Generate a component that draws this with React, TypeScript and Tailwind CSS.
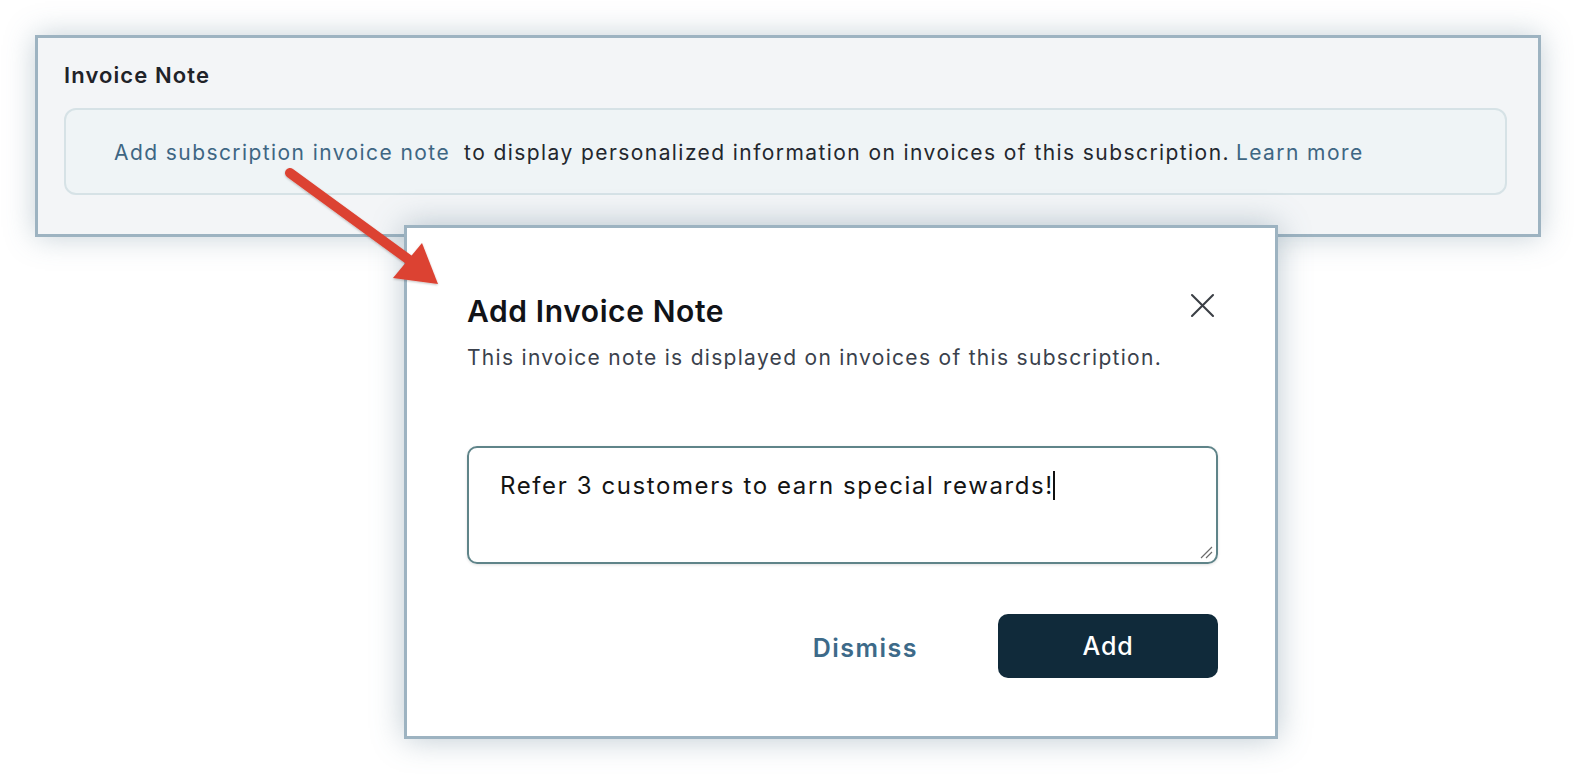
import React from "react";

export default function App() {
  return (
    <div
      className="relative w-[1574px] h-[774px] bg-white overflow-hidden"
      style={{ fontFamily: "Inter, 'Noto Sans', sans-serif" }}
    >
      {/* Background card */}
      <div className="pt-[35px] pl-[35px]">
        <div className="w-[1506px] h-[202px] border-[3px] border-[#9db3c1] bg-[#f3f5f7] shadow-[0_0_28px_rgba(90,120,140,0.35)] pl-[26px] pr-[31px] pt-[22px]">
          <div className="text-[22px] leading-[30px] font-semibold tracking-[1.1px] text-[#1f2329]">Invoice Note</div>
          <div className="mt-[18px] h-[87px] rounded-[12px] border-2 border-[#d6e2e6] bg-[#eff4f6] flex items-center pl-[48px] pt-[2px] text-[21px] tracking-[1.42px] text-[#23272e]">
            <span className="text-[#3e6683]">Add subscription invoice note</span>
            <span className="ml-[14px]">to display personalized information on invoices of this subscription.</span>
            <span className="ml-[6px] text-[#3e6683]">Learn more</span>
          </div>
        </div>
      </div>

      {/* Modal */}
      <div className="relative ml-[404px] -mt-[12px] w-[874px] h-[514px] border-[3px] border-[#9db3c1] bg-white shadow-[0_0_30px_rgba(90,120,140,0.4)] pl-[60px] pr-[57px] pt-[64px]">
        <div className="text-[30px] leading-[38px] font-semibold tracking-[0.6px] text-[#111318]">Add Invoice Note</div>
        <button className="absolute right-[58px] top-[62px] w-[30px] h-[30px] flex items-center justify-center text-[#3b3f45]">
          <svg width="25" height="25" viewBox="0 0 25 25" fill="none" stroke="currentColor" strokeWidth="2.1" strokeLinecap="round">
            <path d="M2 2 L23 23 M23 2 L2 23" />
          </svg>
        </button>
        <div className="mt-[14px] text-[21px] leading-[28px] tracking-[1.3px] text-[#3a414c]">
          This invoice note is displayed on invoices of this subscription.
        </div>
        <div className="relative mt-[74px] h-[118px] rounded-[10px] border-2 border-[#5f8489] shadow-[0_1px_3px_rgba(0,0,0,0.12)] pl-[31px] pt-[22px] text-[24px] leading-[32px] tracking-[1.6px] text-[#141414]">
          <span>Refer 3 customers to earn special rewards!</span>
          <span className="inline-block align-middle w-[2px] h-[29px] bg-[#111] -mt-[4px] -ml-[1px]"></span>
          <svg className="absolute right-[3px] bottom-[3px]" width="14" height="14" viewBox="0 0 14 14" stroke="#6b6b6b" strokeWidth="1.2">
            <path d="M2 13 L13 2 M7 13 L13 7" />
          </svg>
        </div>
        <div className="mt-[50px] flex items-center justify-end">
          <button className="mr-[80px] pt-[6px] text-[25px] font-semibold tracking-[1.5px] text-[#3d6a89]">Dismiss</button>
          <button className="w-[220px] h-[64px] pt-[2px] rounded-[10px] bg-[#102a3a] text-white text-[25px] font-medium tracking-[0.8px]">Add</button>
        </div>
      </div>

      {/* Red arrow overlay */}
      <svg className="absolute left-0 top-0 pointer-events-none" width="1574" height="774">
        <defs>
          <filter id="sh" x="-20%" y="-20%" width="140%" height="140%">
            <feDropShadow dx="0" dy="1" stdDeviation="1.2" floodColor="#000" floodOpacity="0.25" />
          </filter>
        </defs>
        <g filter="url(#sh)">
          <line x1="290" y1="173" x2="412" y2="262" stroke="#dc4232" strokeWidth="10" strokeLinecap="round" />
          <polygon points="438,284 393,278 422,243" fill="#dc4232" />
        </g>
      </svg>
    </div>
  );
}
